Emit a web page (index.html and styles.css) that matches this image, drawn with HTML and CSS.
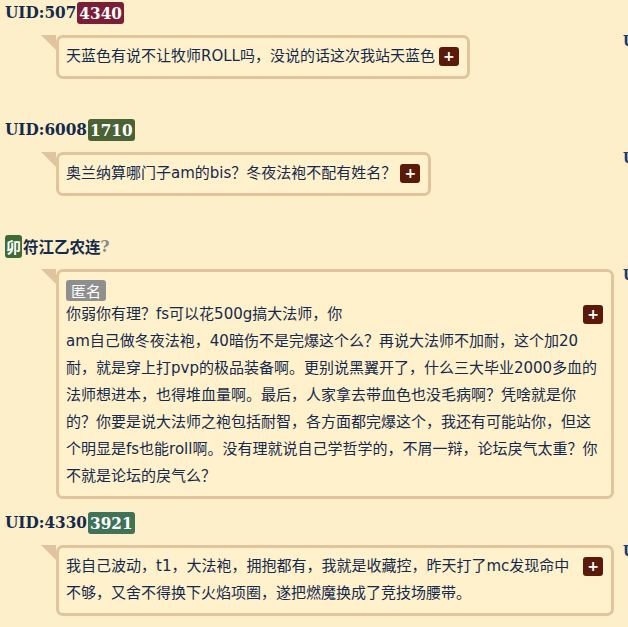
FILE: index.html
```html
<!DOCTYPE html>
<html lang="zh">
<head>
<meta charset="utf-8">
<title>Posts</title>
<link rel="stylesheet" href="styles.css">
</head>
<body>
<div class="list">
  <div class="post">
    <div class="main">
      <div class="head"><span class="uid">UID:507</span><span class="tag maroon">4340</span></div>
      <div class="bubble"><span class="plus">+</span>天蓝色有说不让牧师ROLL吗，没说的话这次我站天蓝色</div>
    </div>
    <div class="side">UID</div>
  </div>
  <div class="post">
    <div class="main">
      <div class="head"><span class="uid">UID:6008</span><span class="tag olive">1710</span></div>
      <div class="bubble"><span class="plus">+</span>奥兰纳算哪门子am的bis？冬夜法袍不配有姓名？</div>
    </div>
    <div class="side">UID</div>
  </div>
  <div class="post">
    <div class="main">
      <div class="head"><span class="tag green cjk">卯</span><span class="name">符江乙农连</span><span class="q">?</span></div>
      <div class="bubble wide">
        <div class="anon-row"><span class="anon">匿名</span></div>
        <span class="plus">+</span>你弱你有理？fs可以花500g搞大法师，你<br>am自己做冬夜法袍，40暗伤不是完爆这个么？再说大法师不加耐，这个加20耐，就是穿上打pvp的极品装备啊。更别说黑翼开了，什么三大毕业2000多血的法师想进本，也得堆血量啊。最后，人家拿去带血色也没毛病啊？凭啥就是你的？你要是说大法师之袍包括耐智，各方面都完爆这个，我还有可能站你，但这个明显是fs也能roll啊。没有理就说自己学哲学的，不屑一辩，论坛戾气太重？你不就是论坛的戾气么？
      </div>
    </div>
    <div class="side">UID</div>
  </div>
  <div class="post">
    <div class="main">
      <div class="head"><span class="uid">UID:4330</span><span class="tag teal">3921</span></div>
      <div class="bubble wide"><span class="plus">+</span>我自己波动，t1，大法袍，拥抱都有，我就是收藏控，昨天打了mc发现命中不够，又舍不得换下火焰项圈，遂把燃魔换成了竞技场腰带。</div>
    </div>
    <div class="side">UID</div>
  </div>
</div>
</body>
</html>
```

FILE: styles.css
```css
html, body {
  margin: 0;
  padding: 0;
}
body {
  background: #fdefc9;
  color: #142a4c;
  overflow: hidden;
  width: 628px;
  height: 627px;
}
.list {
  padding: 1px 0 0 5px;
}
.post {
  display: flex;
  gap: 9px;
  min-height: 117px;
  padding-bottom: 12px;
  box-sizing: border-box;
}
.main {
  flex: 0 0 609px;
  width: 609px;
}
.side {
  flex: 0 0 auto;
  padding-top: 32px;
  font: bold 15px/17px "DejaVu Serif Condensed", "DejaVu Serif", serif;
  color: #1d3a6a;
  white-space: nowrap;
}
.head {
  height: 23px;
  font: bold 17px/23px "DejaVu Serif Condensed", "DejaVu Serif", "Noto Sans CJK SC", serif;
  display: flex;
  align-items: center;
  white-space: nowrap;
}
.uid {
  color: #142a4c;
}
.tag {
  display: inline-block;
  color: #fff;
  padding: 0 2px;
  border-radius: 3px;
  line-height: 22px;
  height: 22px;
  margin-left: 1px;
}
.maroon { background: #7a1e38; }
.olive { background: #4b6234; }
.teal { background: #3f7256; }
.green { background: #3e6a3a; }
.tag.cjk {
  font-family: "Noto Sans CJK SC", sans-serif;
  font-size: 15px;
  padding: 0 1px;
  margin-left: 0;
  height: 23px;
  line-height: 23px;
}
.name {
  font-family: "Noto Sans CJK SC", sans-serif;
  font-weight: bold;
  font-size: 15.5px;
  margin-left: 1px;
}
.q {
  color: #8a8a8a;
  font-family: "DejaVu Serif Condensed", "DejaVu Serif", serif;
  font-weight: bold;
}
.bubble {
  position: relative;
  display: inline-block;
  max-width: 100%;
  box-sizing: border-box;
  margin: 11px 0 0 51px;
  padding: 5px 8px 6px 7px;
  border: 3px solid #dfc49d;
  border-radius: 7px;
  background: #fff1cc;
  font: 15px/27px "DejaVu Sans", "Noto Sans CJK SC", sans-serif;
  color: #142a4c;
}
.bubble.wide {
  display: block;
  width: 558px;
}
.bubble::before {
  content: "";
  position: absolute;
  left: -18px;
  top: -3px;
  width: 0;
  height: 0;
  border-top: 15px solid #dfc49d;
  border-left: 15px solid transparent;
}
.plus {
  float: right;
  width: 20px;
  height: 19px;
  margin: 4px 0 0 4px;
  background: #5a1a0a;
  color: #fff;
  border-radius: 3px;
  font: bold 14px/19px "DejaVu Sans", sans-serif;
  text-align: center;
}
.anon-row {
  height: 24px;
  padding-top: 3px;
  box-sizing: border-box;
  line-height: 21px;
}
.anon {
  display: inline-block;
  background: #8f8f8f;
  color: #fff;
  font: 15px/21px "Noto Sans CJK SC", sans-serif;
  padding: 0 5px;
  border-radius: 3px;
  height: 21px;
  vertical-align: top;
}
```
